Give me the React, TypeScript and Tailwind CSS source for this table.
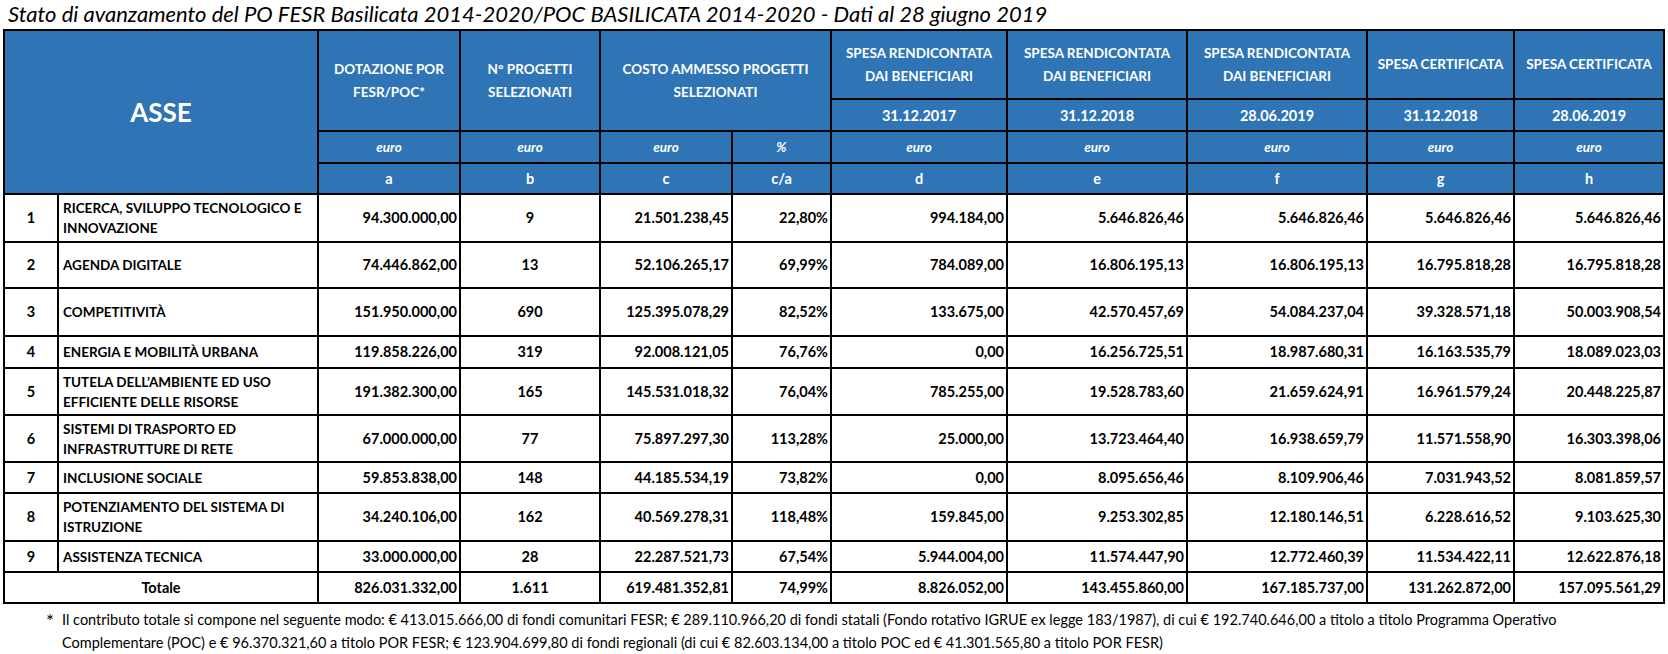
const FONT = "font-['Lato','Liberation_Sans',sans-serif]";

type Row = {
  n: string;
  name: string[];
  h: string;
  values: string[];
};

const rows: Row[] = [
  {
    n: "1",
    name: ["RICERCA, SVILUPPO TECNOLOGICO E", "INNOVAZIONE"],
    h: "h-[48px]",
    values: ["94.300.000,00", "9", "21.501.238,45", "22,80%", "994.184,00", "5.646.826,46", "5.646.826,46", "5.646.826,46", "5.646.826,46"],
  },
  {
    n: "2",
    name: ["AGENDA DIGITALE"],
    h: "h-[46px]",
    values: ["74.446.862,00", "13", "52.106.265,17", "69,99%", "784.089,00", "16.806.195,13", "16.806.195,13", "16.795.818,28", "16.795.818,28"],
  },
  {
    n: "3",
    name: ["COMPETITIVITÀ"],
    h: "h-[48px]",
    values: ["151.950.000,00", "690", "125.395.078,29", "82,52%", "133.675,00", "42.570.457,69", "54.084.237,04", "39.328.571,18", "50.003.908,54"],
  },
  {
    n: "4",
    name: ["ENERGIA E MOBILITÀ URBANA"],
    h: "h-[32px]",
    values: ["119.858.226,00", "319", "92.008.121,05", "76,76%", "0,00", "16.256.725,51", "18.987.680,31", "16.163.535,79", "18.089.023,03"],
  },
  {
    n: "5",
    name: ["TUTELA DELL’AMBIENTE ED USO", "EFFICIENTE DELLE RISORSE"],
    h: "h-[47px]",
    values: ["191.382.300,00", "165", "145.531.018,32", "76,04%", "785.255,00", "19.528.783,60", "21.659.624,91", "16.961.579,24", "20.448.225,87"],
  },
  {
    n: "6",
    name: ["SISTEMI DI TRASPORTO ED", "INFRASTRUTTURE DI RETE"],
    h: "h-[47px]",
    values: ["67.000.000,00", "77", "75.897.297,30", "113,28%", "25.000,00", "13.723.464,40", "16.938.659,79", "11.571.558,90", "16.303.398,06"],
  },
  {
    n: "7",
    name: ["INCLUSIONE SOCIALE"],
    h: "h-[31px]",
    values: ["59.853.838,00", "148", "44.185.534,19", "73,82%", "0,00", "8.095.656,46", "8.109.906,46", "7.031.943,52", "8.081.859,57"],
  },
  {
    n: "8",
    name: ["POTENZIAMENTO DEL SISTEMA DI", "ISTRUZIONE"],
    h: "h-[48px]",
    values: ["34.240.106,00", "162", "40.569.278,31", "118,48%", "159.845,00", "9.253.302,85", "12.180.146,51", "6.228.616,52", "9.103.625,30"],
  },
  {
    n: "9",
    name: ["ASSISTENZA TECNICA"],
    h: "h-[31px]",
    values: ["33.000.000,00", "28", "22.287.521,73", "67,54%", "5.944.004,00", "11.574.447,90", "12.772.460,39", "11.534.422,11", "12.622.876,18"],
  },
];

const totals = ["826.031.332,00", "1.611", "619.481.352,81", "74,99%", "8.826.052,00", "143.455.860,00", "167.185.737,00", "131.262.872,00", "157.095.561,29"];

const th = "border-2 border-black bg-[#2f74b5] text-white font-bold text-center align-middle p-0";
const td = "border-2 border-black bg-white text-black font-bold align-middle p-0";

function ValueCells({ values }: { values: string[] }) {
  return (
    <>
      {values.map((v, i) => (
        <td key={i} className={`${td} ${i === 1 ? "text-center" : "text-right pr-[2px]"}`}>
          {v}
        </td>
      ))}
    </>
  );
}

export default function App() {
  const spesa = [
    { t: ["SPESA RENDICONTATA", "DAI BENEFICIARI"], d: "31.12.2017" },
    { t: ["SPESA RENDICONTATA", "DAI BENEFICIARI"], d: "31.12.2018" },
    { t: ["SPESA RENDICONTATA", "DAI BENEFICIARI"], d: "28.06.2019" },
    { t: ["SPESA CERTIFICATA"], d: "31.12.2018" },
    { t: ["SPESA CERTIFICATA"], d: "28.06.2019" },
  ];

  return (
    <div className={`${FONT} bg-white w-[1668px] h-[654px] overflow-hidden`}>
      <div className="h-[29px] pl-[8px] text-[22px] leading-[27px] italic text-black">
        Stato di avanzamento del PO FESR Basilicata 2014-2020/POC BASILICATA 2014-2020 - Dati al 28 giugno 2019
      </div>
      <div className="pl-[3px]">
        <table className="border-collapse table-fixed w-[1662px] text-[14.5px] leading-[20px]">
          <colgroup>
            <col className="w-[54px]" />
            <col className="w-[260px]" />
            <col className="w-[142px]" />
            <col className="w-[140px]" />
            <col className="w-[132px]" />
            <col className="w-[99px]" />
            <col className="w-[176px]" />
            <col className="w-[180px]" />
            <col className="w-[180px]" />
            <col className="w-[147px]" />
            <col className="w-[150px]" />
          </colgroup>
          <thead className="text-[13.5px] leading-[23px]">
            <tr className="h-[69px]">
              <th colSpan={2} rowSpan={4} className={`${th} text-[26px]`}>
                ASSE
              </th>
              <th rowSpan={2} className={th}>
                DOTAZIONE POR
                <br />
                FESR/POC*
              </th>
              <th rowSpan={2} className={th}>
                N° PROGETTI
                <br />
                SELEZIONATI
              </th>
              <th rowSpan={2} colSpan={2} className={th}>
                COSTO AMMESSO PROGETTI
                <br />
                SELEZIONATI
              </th>
              {spesa.map((s, i) => (
                <th key={i} className={th}>
                  {s.t.map((line, j) => (
                    <div key={j}>{line}</div>
                  ))}
                </th>
              ))}
            </tr>
            <tr className="h-[32px]">
              {spesa.map((s, i) => (
                <th key={i} className={`${th} text-[14.5px]`}>
                  {s.d}
                </th>
              ))}
            </tr>
            <tr className="h-[32px]">
              {["euro", "euro", "euro", "%", "euro", "euro", "euro", "euro", "euro"].map((u, i) => (
                <th key={i} className={`${th} italic`}>
                  {u}
                </th>
              ))}
            </tr>
            <tr className="h-[31px]">
              {["a", "b", "c", "c/a", "d", "e", "f", "g", "h"].map((l, i) => (
                <th key={i} className={`${th} text-[14.5px]`}>
                  {l}
                </th>
              ))}
            </tr>
          </thead>
          <tbody>
            {rows.map((r) => (
              <tr key={r.n} className={r.h}>
                <td className={`${td} text-center`}>{r.n}</td>
                <td className={`${td} text-left pl-[4px] text-[13.5px]`}>
                  {r.name.map((line, j) => (
                    <div key={j}>{line}</div>
                  ))}
                </td>
                <ValueCells values={r.values} />
              </tr>
            ))}
            <tr className="h-[31px]">
              <td colSpan={2} className={`${td} text-center`}>
                Totale
              </td>
              <ValueCells values={totals} />
            </tr>
          </tbody>
        </table>
      </div>
      <div className="flex pl-[46px] pt-[4px] text-[14.5px] leading-[23px] text-black">
        <span className="w-[16px] shrink-0 text-[19px] leading-[25px]">*</span>
        <p>
          Il contributo totale si compone nel seguente modo: € 413.015.666,00 di fondi comunitari FESR; € 289.110.966,20 di fondi statali (Fondo rotativo IGRUE ex legge 183/1987), di cui € 192.740.646,00 a titolo a titolo Programma Operativo
          <br />
          Complementare (POC) e € 96.370.321,60 a titolo POR FESR; € 123.904.699,80 di fondi regionali (di cui € 82.603.134,00 a titolo POC ed € 41.301.565,80 a titolo POR FESR)
        </p>
      </div>
    </div>
  );
}
